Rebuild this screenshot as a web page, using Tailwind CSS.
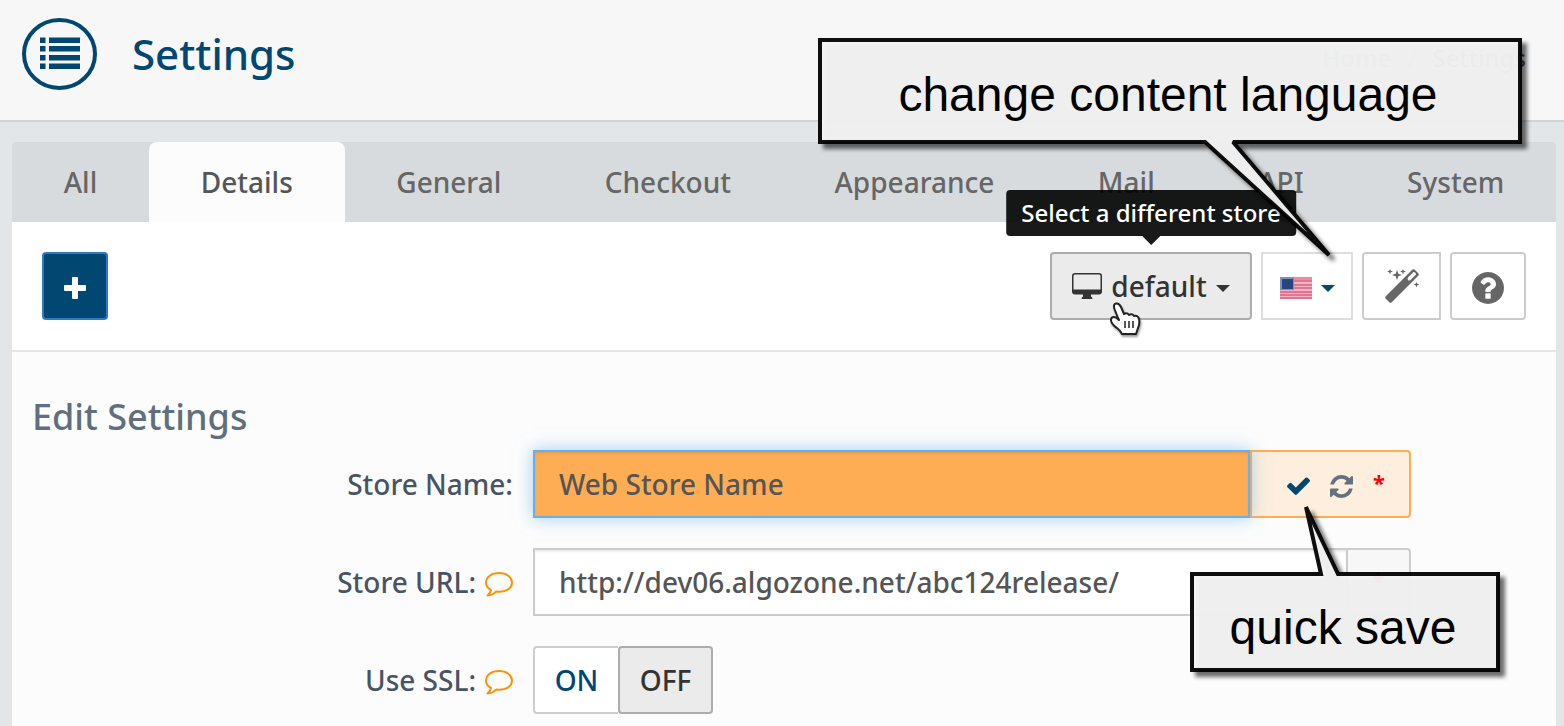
<!DOCTYPE html>
<html lang="en">
<head>
<meta charset="utf-8">
<meta name="viewport" content="width=device-width, initial-scale=1">
<title>Settings</title>
<script src="https://cdn.jsdelivr.net/npm/@tailwindcss/browser@4"></script>
</head>
<body class="relative flex min-h-screen flex-col overflow-x-hidden bg-[#e2e6e9] font-['Noto_Sans',sans-serif] text-[28px] leading-10 font-medium text-[#555555]">

<header class="flex h-[122px] items-start justify-between border-b-2 border-[#cfd4d8] bg-[#f7f7f7] pr-[38px] pl-[22px]">
  <div class="flex items-center gap-[35px] pt-[18px]">
    <svg class="h-[72px] w-[75px]" viewBox="0 0 75 72" fill="#004771" aria-hidden="true">
      <ellipse cx="37.500" cy="36" rx="35.500" ry="34" fill="none" stroke="#004771" stroke-width="4"/>
      <path d="M18 19.500h5.500v5.500h-5.500zM27 19.500h31v5.500h-31zM18 28h5.500v5.500h-5.500zM27 28h31v5.500h-31zM18 37h5.500v5.500h-5.500zM27 37h31v5.500h-31zM18 45.500h5.500v5.500h-5.500zM27 45.500h31v5.500h-31z"/>
    </svg>
    <h1 class="text-[42px] font-medium text-[#004771]">Settings</h1>
  </div>
  <nav aria-label="Breadcrumb" class="flex gap-4 pt-[38px] text-[24px]">
    <a href="#" class="text-[#5d7f99]">Home</a>
    <span class="text-[#aaaaaa]">/</span>
    <span>Settings</span>
  </nav>
</header>

<main class="mt-5 mr-2 ml-3 flex flex-1 flex-col">
  <nav aria-label="Settings sections" class="flex h-20 rounded-t bg-[#d7dbde] text-[#666666]">
    <a href="#" class="flex flex-auto items-center justify-center">All</a>
    <a href="#" aria-current="page" class="flex flex-auto items-center justify-center rounded-t-lg bg-[#fcfcfc] text-[#555555]">Details</a>
    <a href="#" class="flex flex-auto items-center justify-center">General</a>
    <a href="#" class="flex flex-auto items-center justify-center">Checkout</a>
    <a href="#" class="flex flex-auto items-center justify-center">Appearance</a>
    <a href="#" class="flex flex-auto items-center justify-center">Mail</a>
    <a href="#" class="flex flex-auto items-center justify-center">API</a>
    <a href="#" class="flex flex-auto items-center justify-center">System</a>
  </nav>

  <div class="flex h-[130px] items-start justify-between border-b-2 border-[#e5e5e5] bg-white px-[30px] pt-[30px]">
    <button type="button" aria-label="Add" class="flex h-[68px] w-[66px] items-center justify-center rounded border-2 border-[#2f7bbf] bg-[#004771]">
      <svg class="mt-1 size-[22px]" viewBox="0 0 22 22" fill="#ffffff" aria-hidden="true"><rect x="8" width="6" height="22" rx="1"/><rect y="8" width="22" height="6" rx="1"/></svg>
    </button>
    <div class="flex gap-[9px]">
      <div class="relative">
        <button type="button" aria-haspopup="true" aria-describedby="store-tip" class="flex h-[68px] w-[202px] items-center justify-center gap-[9px] rounded border-2 border-[#adadad] bg-[#ebebeb] text-[#333333]">
          <svg class="h-[26px] w-[30px]" viewBox="0 0 30 26" fill="#333333" aria-hidden="true">
            <path fill-rule="evenodd" d="M3 0h24a3 3 0 0 1 3 3v15.500a3 3 0 0 1-3 3h-8v2q1.500.500 1.500 2.500h-11q0-2 1.500-2.500v-2h-8a3 3 0 0 1-3-3v-15.500a3 3 0 0 1 3-3zM3 1.500q-1.500 0-1.500 1.500v13.500h27v-13.500q0-1.500-1.500-1.500z"/>
          </svg>
          default
          <svg class="mt-1 h-[7px] w-[14px]" viewBox="0 0 14 7" fill="#333333" aria-hidden="true"><path d="M0 0h14l-7 7z"/></svg>
        </button>
        <div id="store-tip" role="tooltip" class="absolute bottom-[84px] left-1/2 flex h-[46px] -translate-x-1/2 items-center rounded bg-black/90 px-[15px] text-[24px] whitespace-nowrap text-white">Select a different store
          <svg class="absolute top-full left-1/2 h-[9px] w-[18px] -translate-x-1/2" viewBox="0 0 18 9" fill="#191919" aria-hidden="true"><path d="M0 0h18l-9 9z"/></svg>
        </div>
        <svg class="absolute top-[49px] left-[58px] h-[36px] w-[34px] drop-shadow-[1px_2px_1px_rgba(0,0,0,0.4)]" viewBox="0 0 34 36" aria-hidden="true">
          <path d="M10 17 6.500 8Q5 3 8 2.500t5 3.500l3 7q3-2 5 1 3-2 5 1 4-1 5 3 1 5-1 9l-2 6H14q-2-4-5-6-6-4-6-8 0-3 3-3 2 0 5 3z" fill="#ffffff" stroke="#222222" stroke-width="2" stroke-linejoin="round"/>
          <path d="M17 20v7M21 20v7M25 20v7" stroke="#222222" stroke-width="1.500"/>
        </svg>
      </div>
      <button type="button" aria-label="Content language" aria-haspopup="true" class="flex h-[68px] w-[92px] items-center justify-center gap-[9px] border-2 border-[#dddddd] bg-white">
        <svg class="mt-1 h-[22px] w-[32px]" viewBox="0 0 32 22" aria-hidden="true">
          <path fill="#efb3c2" d="M0 0h32v22H0z"/>
          <path fill="#df7594" d="M0 3h32v2H0zM0 7h32v2H0zM0 10h32v2H0zM0 14h32v2H0zM0 17h32v2H0zM0 20h32v2H0z"/>
          <path fill="#f08aa4" d="M0 0h32v3H0z"/>
          <path fill="#7d93bb" d="M0 0h14v13H0z"/><path fill="#264680" d="M2 2h11v10H2z"/>
        </svg>
        <svg class="mt-1 h-[7px] w-[14px]" viewBox="0 0 14 7" fill="#004771" aria-hidden="true"><path d="M0 0h14l-7 7z"/></svg>
      </button>
      <button type="button" aria-label="Wizard" class="flex h-[68px] w-[79px] items-center justify-center rounded-l border-2 border-[#cccccc] bg-white">
        <svg class="size-[34px]" viewBox="0 0 34 34" fill="#666666" aria-hidden="true">
          <path fill-rule="evenodd" d="M27.500.500Q28.500 0 29.500.500L33.500 4.500Q34 5.500 33.500 6.500L6.500 33.500Q5.500 34 4.500 33.500L.500 29.500Q0 28.500.500 27.500zM28.500 3l-5.500 5.500q-1 1.500 0 2.500t2.500 0l5.500-5.500q0-2.500-2.500-2.500z"/>
          <path d="m12 1 1.300 3.700L17 6l-3.700 1.300L12 11l-1.300-3.700L7 6l3.700-1.300zM5 0l.800 1.700L8 2.500l-2.200.800L5 5.500l-.800-2.200L2 2.500l2.200-.800zM18 0l.800 1.700 2.200.800-2.200.800-.800 2.200-.800-2.200-2.200-.800 2.200-.800zM31.500 13l.800 1.700 2.200.800-2.200.800-.8 2.200-.800-2.200-2.200-.800 2.200-.800z"/>
        </svg>
      </button>
      <button type="button" aria-label="Help" class="flex h-[68px] w-[76px] items-center justify-center rounded border-2 border-[#cccccc] bg-white">
        <svg class="mt-1 size-8" viewBox="128 128 1536 1536" fill="#666666" aria-hidden="true"><path d="M1024 1376v-192q0-14-9-23t-23-9h-192q-14 0-23 9t-9 23v192q0 14 9 23t23 9h192q14 0 23-9t9-23zm256-672q0-88-55.500-163t-138.500-116-170-41q-243 0-371 213-15 24 8 42l132 100q7 6 19 6 16 0 25-12 53-68 86-92 34-24 86-24 48 0 85.500 26t37.500 59q0 38-20 61t-68 45q-63 28-115.500 86.500t-52.500 125.500v36q0 14 9 23t23 9h192q14 0 23-9t9-23q0-19 21.500-49.500t54.500-49.500q32-18 49-28.500t46-35 44.500-48 28-60.500 12.500-81zm384 192q0 209-103 385.500t-279.500 279.500-385.500 103-385.500-103-279.500-279.500-103-385.500 103-385.500 279.500-279.500 385.500-103 385.500 103 279.500 279.500 103 385.500z"/></svg>
      </button>
    </div>
  </div>

  <form class="flex-1 bg-[#fcfcfc] pt-[45px] pb-3">
    <h2 class="px-5 text-[36px] text-[#5f6f7e]">Edit Settings</h2>
    <div class="mt-[13px] grid grid-cols-[501px_1fr] gap-x-5 gap-y-[30px] pr-[145px] text-[#495463]">
      <label for="store-name" class="flex items-center justify-end">Store Name:</label>
      <div class="flex h-[68px]">
        <input id="store-name" type="text" value="Web Store Name" class="relative min-w-0 flex-1 border-2 border-[#66afe9] bg-[#ffad55] px-6 text-[#555555] shadow-[inset_0_2px_2px_rgba(0,0,0,0.08),0_0_16px_rgba(102,175,233,0.6)] outline-none">
        <div class="flex w-[161px] items-center gap-5 rounded-r border-2 border-[#ffad55] bg-[#fdeedd] pl-[35px]">
          <button type="button" aria-label="Save"><svg class="mt-1 h-[18px] w-[23px]" viewBox="121 306 1550 1216" fill="#004771" aria-hidden="true"><path d="M1671 566q0 40-28 68l-724 724-136 136q-28 28-68 28t-68-28l-136-136-362-362q-28-28-28-68t28-68l136-136q28-28 68-28t68 28l294 295 656-657q28-28 68-28t68 28l136 136q28 28 28 68z"/></svg></button>
          <button type="button" aria-label="Reset"><svg class="mt-1 size-[23px]" viewBox="128 128 1536 1536" fill="#64717f" aria-hidden="true"><path d="M1639 1056q0 5-1 7-64 268-268 434.500t-478 166.500q-146 0-282.500-55t-243.500-157l-129 129q-19 19-45 19t-45-19-19-45v-448q0-26 19-45t45-19h448q26 0 45 19t19 45-19 45l-137 137q71 66 161 102t187 36q134 0 250-65t186-179q11-17 53-117 8-23 30-23h192q13 0 22.500 9.500t9.500 22.500zm25-800v448q0 26-19 45t-45 19h-448q-26 0-45-19t-19-45 19-45l138-138q-148-137-349-137-134 0-250 65t-186 179q-11 17-53 117-8 23-30 23h-199q-13 0-22.500-9.500t-9.500-22.500v-7q65-268 270-434.500t480-166.500q146 0 284 55.500t245 156.500l130-129q19-19 45-19t45 19 19 45z"/></svg></button>
          <span class="pb-1 text-[22px] font-bold text-[#ff0000]">*</span>
        </div>
      </div>

      <label for="store-url" class="flex items-center justify-end gap-[9px]">Store URL:
        <svg class="mt-1 h-[25px] w-[28px]" viewBox="0 0 28 25" fill="none" stroke="#f89406" stroke-width="2" stroke-linejoin="round" aria-hidden="true"><path d="M14 1C6.500 1 1 5 1 10.500c0 3 2 6 5 7.500-.500 2.500-1.500 4-3.500 5.500 4 0 6.500-1.500 8.500-4 1 .300 2 .300 3 .300C21.500 19.800 27 16 27 10.500S21.500 1 14 1z"/></svg>
      </label>
      <div class="flex h-[68px]">
        <input id="store-url" type="text" value="http://dev06.algozone.net/abc124release/" class="min-w-0 flex-1 border-2 border-[#cccccc] bg-white px-6 text-[#555555] shadow-[inset_0_2px_2px_rgba(0,0,0,0.08)] outline-none">
        <div class="flex w-[63px] items-center justify-center rounded-r border-2 border-l-0 border-[#cccccc] bg-[#f7f7f7]"><span class="pb-1 text-[22px] font-bold text-[#ff0000]">*</span></div>
      </div>

      <div id="ssl-label" class="flex items-center justify-end gap-[9px]">Use SSL:
        <svg class="mt-1 h-[25px] w-[28px]" viewBox="0 0 28 25" fill="none" stroke="#f89406" stroke-width="2" stroke-linejoin="round" aria-hidden="true"><path d="M14 1C6.500 1 1 5 1 10.500c0 3 2 6 5 7.500-.500 2.500-1.500 4-3.500 5.500 4 0 6.500-1.500 8.500-4 1 .300 2 .300 3 .300C21.500 19.800 27 16 27 10.500S21.500 1 14 1z"/></svg>
      </div>
      <div role="group" aria-labelledby="ssl-label" class="flex h-[68px]">
        <button type="button" aria-pressed="false" class="w-[85px] rounded-l border-2 border-r-0 border-[#cccccc] bg-white text-[#004771]">ON</button>
        <button type="button" aria-pressed="true" class="w-[95px] rounded border-2 border-[#adadad] bg-[#ebebeb] text-[#333333]">OFF</button>
      </div>
    </div>
  </form>
</main>

<!-- Annotations lying over the page -->
<div class="absolute top-[38px] right-[42px] flex h-[106px] w-[704px] items-center justify-center pt-2 pr-1 font-['Liberation_Sans',Arial,sans-serif] text-[48px] font-normal text-black">
  <svg class="absolute top-0 left-0 h-[222px] w-[704px] overflow-visible drop-shadow-[5px_5px_2px_rgba(0,0,0,0.6)]" viewBox="0 0 704 222" aria-hidden="true">
    <path d="M2 2H702V104H415L511 217 387 104H2z" fill="#f8f8f8" fill-opacity=".94" stroke="#000000" stroke-opacity=".94" stroke-width="4" stroke-miterlimit="2"/>
  </svg>
  <span class="relative">change content language</span>
</div>
<div class="absolute top-[572px] right-[64px] flex h-[100px] w-[310px] items-center justify-center pt-3 pr-1 font-['Liberation_Sans',Arial,sans-serif] text-[48px] font-normal text-black">
  <svg class="absolute top-0 left-0 h-[100px] w-[310px] overflow-visible drop-shadow-[5px_5px_2px_rgba(0,0,0,0.6)]" viewBox="0 0 310 100" aria-hidden="true">
    <path d="M2 2H131L116-65 148 2H308V98H2z" fill="#f8f8f8" fill-opacity=".94" stroke="#000000" stroke-opacity=".94" stroke-width="4" stroke-miterlimit="2"/>
  </svg>
  <span class="relative">quick save</span>
</div>
</body>
</html>
